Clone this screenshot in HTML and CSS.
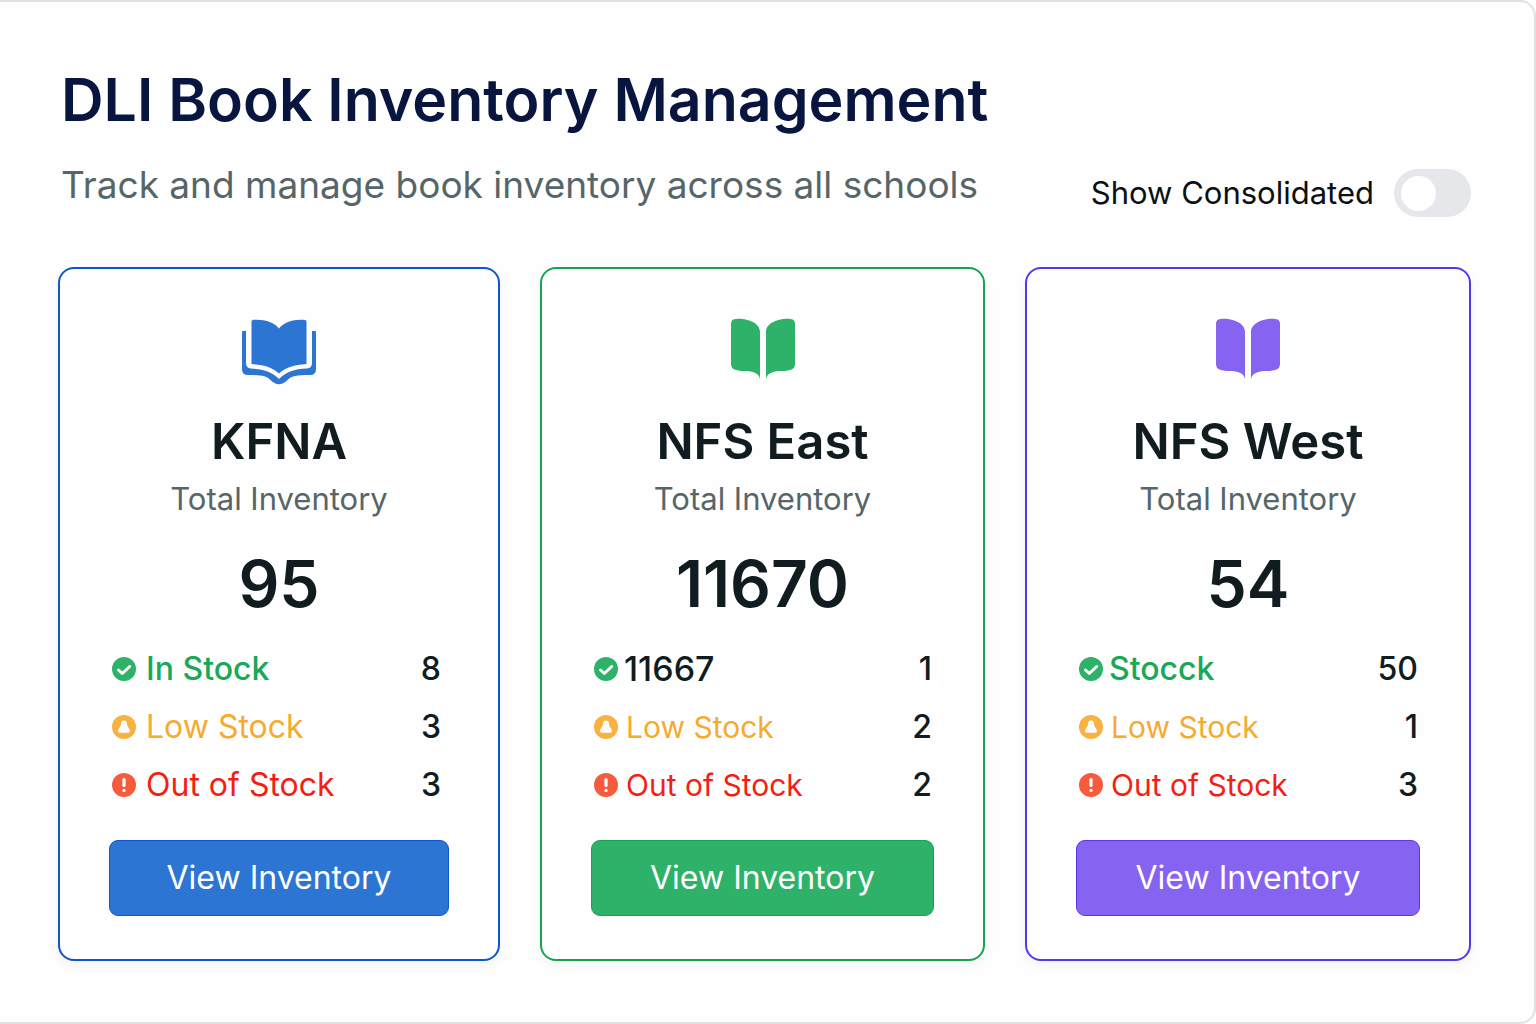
FILE: index.html
```html
<!DOCTYPE html>
<html lang="en">
<head>
<meta charset="utf-8">
<meta name="viewport" content="width=device-width, initial-scale=1">
<title>DLI Book Inventory Management</title>
<link rel="stylesheet" href="styles.css">
</head>
<body>
<svg class="sprite" aria-hidden="true">
  <symbol id="book" viewBox="0 0 66 62">
    <path d="M6 1C17 0 30 5 30 14V61C29 56 25 54 18 53C13 53 9 53 6 52Q1 51 1 46V6Q1 1 6 1Z"/>
    <path d="M60 1C49 0 36 5 36 14V61C37 56 41 54 48 53C53 53 57 53 60 52Q65 51 65 46V6Q65 1 60 1Z"/>
  </symbol>
  <symbol id="book-open" viewBox="0 0 74 66">
    <path d="M10 1C22 0 32 3 37 9.500C42 3 52 0 63 1Q64.500 1 64.500 2.500V45C52 46 44 48 37 54.500C30 48 22 46 9.500 45V2.500Q9.500 1 11 1Z"/>
    <path d="M1 12H4V44Q4 49 9 49.500C22 50 30 53 37 60C44 53 52 50 65 49.500Q70 49 70 44V12H73Q74 12 74 13V50Q74 56 68 56C54 56 50 57 46 60.500Q37 70 28 60.500C24 57 20 56 6 56Q0 56 0 50V13Q0 12 1 12Z"/>
  </symbol>
  <symbol id="check" viewBox="0 0 24 24">
    <circle cx="12" cy="12" r="12"/>
    <path d="M6.500 13L10.300 16.500L17.700 9.500" fill="none" stroke="#fff" stroke-width="3" stroke-linecap="round" stroke-linejoin="round"/>
  </symbol>
  <symbol id="low" viewBox="0 0 24 24">
    <circle cx="12" cy="12" r="12"/>
    <path d="M12 5.500C14 5.500 15 7 15 9C15 12 18 13.500 18 16Q18 17.700 16 17.700H8Q6 17.700 6 16C6 13.500 9 12 9 9C9 7 10 5.500 12 5.500Z" fill="#fff"/>
  </symbol>
  <symbol id="alert" viewBox="0 0 24 24">
    <circle cx="12" cy="12" r="12"/>
    <path d="M12 6.500V12.500M12 17.300V17.400" fill="none" stroke="#fff" stroke-width="3.200" stroke-linecap="round"/>
  </symbol>
</svg>
<main class="panel">
  <header class="header">
    <div class="heading">
      <h1 class="title">DLI Book Inventory Management</h1>
      <p class="subtitle">Track and manage book inventory across all schools</p>
    </div>
    <label class="toggle">Show Consolidated <input class="switch" type="checkbox" role="switch"></label>
  </header>
  <div class="cards">
    <section class="card blue">
      <svg class="book wide" aria-hidden="true"><use href="#book-open"/></svg>
      <h2 class="school">KFNA</h2>
      <p class="caption">Total Inventory</p>
      <p class="total">95</p>
      <ul class="stats roomy">
        <li class="stat in"><svg class="dot" aria-hidden="true"><use href="#check"/></svg><span class="name">In Stock</span><span class="count">8</span></li>
        <li class="stat low"><svg class="dot" aria-hidden="true"><use href="#low"/></svg><span class="name">Low Stock</span><span class="count">3</span></li>
        <li class="stat out"><svg class="dot" aria-hidden="true"><use href="#alert"/></svg><span class="name">Out of Stock</span><span class="count">3</span></li>
      </ul>
      <button class="view" type="button">View Inventory</button>
    </section>
    <section class="card green">
      <svg class="book" aria-hidden="true"><use href="#book"/></svg>
      <h2 class="school">NFS East</h2>
      <p class="caption">Total Inventory</p>
      <p class="total">11670</p>
      <ul class="stats">
        <li class="stat in"><svg class="dot" aria-hidden="true"><use href="#check"/></svg><span class="name number">11667</span><span class="count">1</span></li>
        <li class="stat low"><svg class="dot" aria-hidden="true"><use href="#low"/></svg><span class="name">Low Stock</span><span class="count">2</span></li>
        <li class="stat out"><svg class="dot" aria-hidden="true"><use href="#alert"/></svg><span class="name">Out of Stock</span><span class="count">2</span></li>
      </ul>
      <button class="view" type="button">View Inventory</button>
    </section>
    <section class="card purple">
      <svg class="book" aria-hidden="true"><use href="#book"/></svg>
      <h2 class="school">NFS West</h2>
      <p class="caption">Total Inventory</p>
      <p class="total">54</p>
      <ul class="stats">
        <li class="stat in"><svg class="dot" aria-hidden="true"><use href="#check"/></svg><span class="name">Stocck</span><span class="count">50</span></li>
        <li class="stat low"><svg class="dot" aria-hidden="true"><use href="#low"/></svg><span class="name">Low Stock</span><span class="count">1</span></li>
        <li class="stat out"><svg class="dot" aria-hidden="true"><use href="#alert"/></svg><span class="name">Out of Stock</span><span class="count">3</span></li>
      </ul>
      <button class="view" type="button">View Inventory</button>
    </section>
  </div>
</main>
</body>
</html>
```
FILE: styles.css
```css
* { box-sizing: border-box; }

body {
  margin: 0;
  background: #fff;
  color: #101c20;
  font-family: Inter, "Liberation Sans", sans-serif;
}

h1, h2, p, ul { margin: 0; padding: 0; font-weight: 400; }

.sprite { display: none; }

.panel {
  min-height: 100vh;
  padding: 62px 63px 61px 58px;
  border: 2px solid #e0e1e1;
  border-left: 0;
  border-radius: 0 16px 16px 0;
  background: #fefefe;
}

.header {
  display: flex;
  justify-content: space-between;
  align-items: flex-end;
  padding-left: 3px;
  margin-bottom: 50px;
}

.heading { padding-bottom: 8px; }

.title {
  color: #08163f;
  font-size: 59px;
  font-weight: 600;
  line-height: 72px;
  white-space: nowrap;
}

.subtitle {
  margin-top: 25px;
  color: #566668;
  font-size: 37px;
  line-height: 48px;
  white-space: nowrap;
}

.toggle {
  display: flex;
  align-items: center;
  gap: 20px;
  font-size: 31px;
  line-height: 48px;
  white-space: nowrap;
  color: #0b1013;
}

.switch {
  appearance: none;
  display: flex;
  align-items: center;
  width: 77px;
  height: 48px;
  margin: 0;
  padding: 0 7px;
  border-radius: 24px;
  background: #e5e7ea;
}

.switch::before {
  content: "";
  width: 35px;
  height: 35px;
  border-radius: 50%;
  background: #fff;
}

.switch:checked { justify-content: flex-end; background: #2c75d3; }

.cards {
  display: grid;
  grid-template-columns: 442fr 445fr 446fr;
  gap: 40px;
}

.card {
  display: flex;
  flex-direction: column;
  align-items: center;
  padding: 49px 49px 43px;
  border: 2px solid var(--line);
  border-radius: 16px;
  background: #fefefe;
  box-shadow: 0 4px 12px rgb(40 40 90 / 5%);
}

.blue { --line: #0c57cc; --fill: #2c75d3; }
.green { --line: #16a350; --fill: #2eb269; }
.purple { --line: #5a35ea; --fill: #8763f1; }

.book { width: 66px; height: 68px; padding-bottom: 6px; fill: var(--fill); }
.book.wide { width: 74px; padding: 1px 0; }

.school {
  margin-top: 26px;
  font-size: 49px;
  font-weight: 600;
  line-height: 60px;
}

.caption {
  margin-top: 7px;
  color: #566668;
  font-size: 31px;
  line-height: 40px;
}

.total {
  margin-top: 25px;
  font-size: 64px;
  font-weight: 600;
  line-height: 80px;
}

.stats {
  align-self: stretch;
  margin-top: 16px;
  padding: 0 2px 0 3px;
  list-style: none;
}

.stat {
  display: flex;
  align-items: center;
  gap: 8px;
  font-size: 32px;
  line-height: 58px;
}

.dot { flex: none; width: 24px; height: 24px; }
.name { flex: 1; font-size: 30px; white-space: nowrap; }
.count { font-weight: 500; }

.in { gap: 6px; color: #18a957; }
.in .name { font-size: 32px; font-weight: 500; }
.in .dot { fill: #2eb269; }
.in .number { font-size: 34px; }
.low { color: #f5ab2e; }
.low .dot { fill: #f9b241; }
.out { color: #f41f12; }
.out .dot { fill: #f85a3e; }
.number, .count { color: #101c20; }

.roomy { padding-right: 8px; }
.roomy .stat { gap: 10px; }
.roomy .name { font-size: 32px; }

.view {
  align-self: stretch;
  margin-top: 26px;
  padding: 0;
  border: 1px solid var(--line);
  border-radius: 9px;
  background: var(--fill);
  color: #fff;
  font: inherit;
  font-size: 32px;
  line-height: 74px;
}
```
